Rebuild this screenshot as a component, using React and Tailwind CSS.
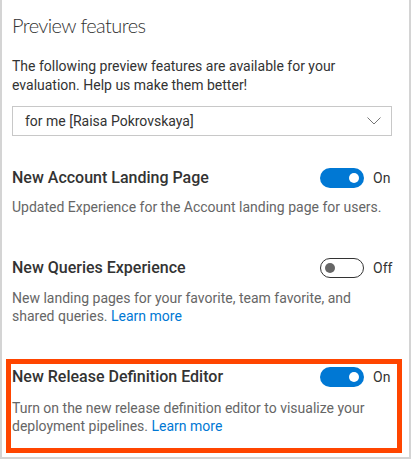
import React from "react";

function Toggle({ on }) {
  if (on) {
    return (
      <div className="w-[44px] h-[20px] rounded-full bg-[#0078d4] flex items-center justify-end pr-[5px]">
        <div className="w-[10px] h-[10px] rounded-full bg-white" />
      </div>
    );
  }
  return (
    <div className="w-[44px] h-[20px] rounded-full border border-[#333333] flex items-center justify-start pl-[4px]">
      <div className="w-[10px] h-[10px] rounded-full bg-[#666666]" />
    </div>
  );
}

function Row({ title, on }) {
  return (
    <div className="flex items-center justify-between h-[20px]">
      <div className="text-[16px] leading-[20px] font-medium text-[#333333]">{title}</div>
      <div className="flex items-center">
        <Toggle on={on} />
        <div className="ml-[9px] w-[19px] text-[14px] leading-[20px] text-[#333333]">{on ? "On" : "Off"}</div>
      </div>
    </div>
  );
}

export default function App() {
  return (
    <div
      className="w-[411px] h-[459px] bg-white border-l-2 border-r-2 border-b-2 border-[#d4d4d4] pl-[10px] pr-[17px] pt-[9px]"
      style={{ fontFamily: 'Roboto, "Open Sans", sans-serif' }}
    >
      <div
        className="text-[20px] leading-[28px] font-light tracking-[-0.6px] text-[#333333] mt-[2px]"
        style={{ fontFamily: 'Lato, Roboto, sans-serif' }}
      >
        Preview features
      </div>
      <p className="mt-[18px] text-[14px] leading-[19px] text-[#333333]">
        The following preview features are available for your evaluation. Help us make them better!
      </p>
      <div className="mt-[11px] h-[30px] border border-[#c8c8c8] flex items-center justify-between pl-[12px] pr-[10px]">
        <span className="text-[14px] leading-[19px] text-[#333333]">for me [Raisa Pokrovskaya]</span>
        <svg width="14" height="8" viewBox="0 0 14 8" fill="none">
          <path d="M0.5 0.5 L7 7 L13.5 0.5" stroke="#767676" strokeWidth="1" />
        </svg>
      </div>

      <div className="mt-[32px]">
        <Row title="New Account Landing Page" on />
        <p className="mt-[11px] text-[14px] leading-[17px] text-[#666666]">
          Updated Experience for the Account landing page for users.
        </p>
      </div>

      <div className="mt-[42px]">
        <Row title="New Queries Experience" on={false} />
        <p className="mt-[11px] text-[14px] leading-[18px] text-[#666666]">
          New landing pages for your favorite, team favorite, and shared queries.{" "}
          <span className="text-[#0078d4]">Learn more</span>
        </p>
      </div>

      <div className="mt-[34px] ml-[-6px] mr-[-10px] border-[5px] border-[#ff4500] pl-[1px] pr-[5px] pt-[3px] pb-[13px]">
        <Row title="New Release Definition Editor" on />
        <p className="mt-[12px] text-[14px] leading-[18px] text-[#666666]">
          Turn on the new release definition editor to visualize your deployment pipelines.{" "}
          <span className="text-[#0078d4]">Learn more</span>
        </p>
      </div>
    </div>
  );
}
